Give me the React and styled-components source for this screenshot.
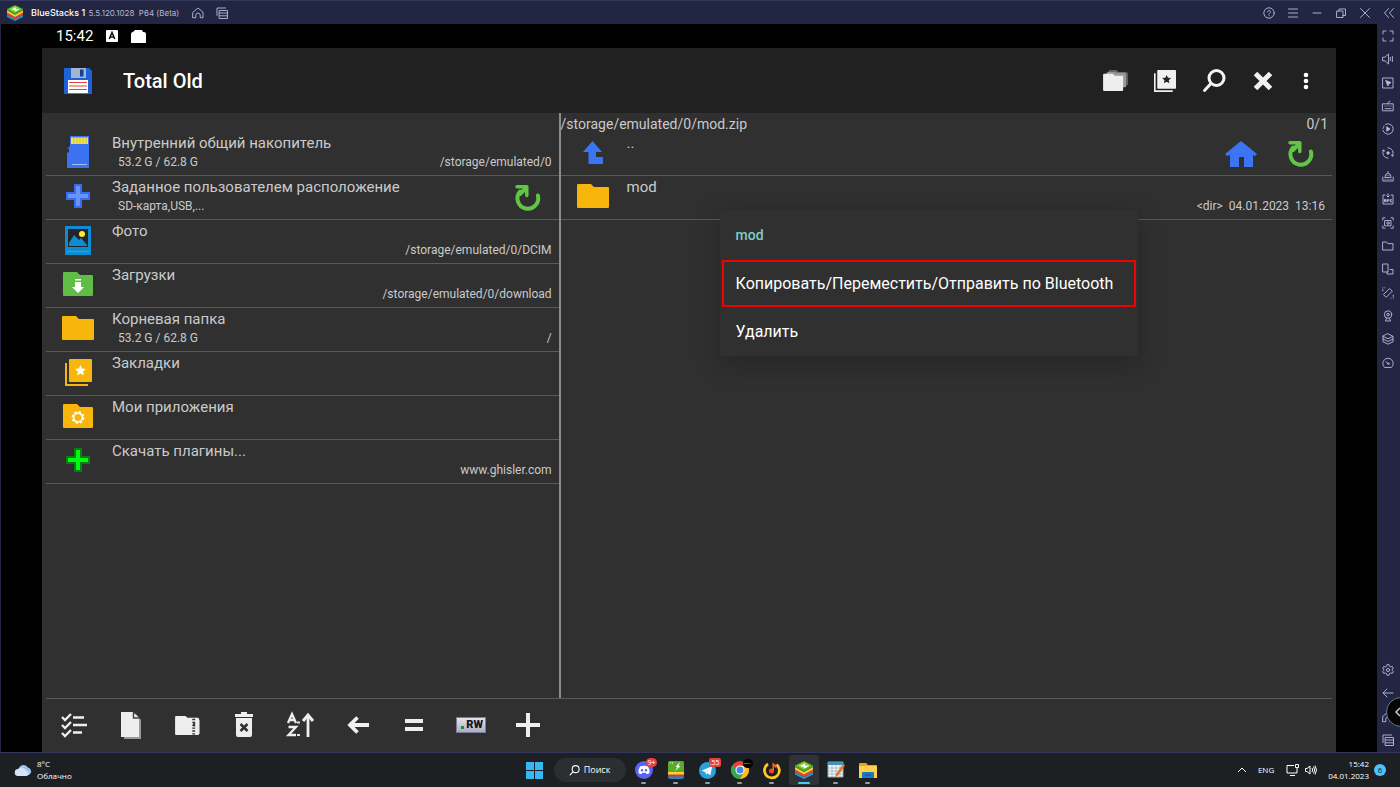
import React from "react";
import styled, { createGlobalStyle } from "styled-components";

const GlobalStyle = createGlobalStyle`
  *, *::before, *::after { box-sizing: border-box; }
  body { margin: 0; background: #000; font-family: Roboto, "Noto Sans", sans-serif; }
  button { margin: 0; padding: 0; border: 0; background: none; color: inherit; font: inherit; text-align: left; }
  ul { list-style: none; margin: 0; padding: 0; }
  svg { display: block; flex: none; overflow: visible; }
`;

const Desktop = styled.div`
  min-height: 100vh;
  display: flex;
  flex-direction: column;
`;

const TitleBar = styled.header`
  height: 24px;
  display: flex;
  align-items: center;
  justify-content: space-between;
  padding: 0 5px 0 7px;
  background: #232642;
  border-top: 1px solid #34385a;
  color: #fff;
  font-family: Inter, "Open Sans", sans-serif;
`;

const TitleGroup = styled.div`
  display: flex;
  align-items: center;
  gap: ${(p) => p.$gap}px;
`;

const WindowTitle = styled.h1`
  margin: 0 9px 0 4px;
  font-size: 9px;
  line-height: 12px;
  font-weight: 500;
  white-space: nowrap;
`;

const Version = styled.span`
  margin-left: 1px;
  font-size: 8px;
  font-weight: 400;
  color: #b4b7d4;
`;

const LineButton = styled.button`
  width: 12px;
  height: 12px;
  color: #b9bcdb;
`;

const Workspace = styled.div`
  flex: 1;
  display: flex;
  background: #232642;
`;

const Screen = styled.main`
  flex: 1;
  min-width: 0;
  display: flex;
  flex-direction: column;
  margin-left: 1px;
  padding: 0 41px;
  background: #000;
`;

const StatusBar = styled.div`
  height: 24px;
  display: flex;
  align-items: center;
  gap: 13px;
  padding-left: 14px;
  color: #fff;
  font-size: 15px;
  line-height: 24px;
`;

const AppBar = styled.div`
  height: 65px;
  display: flex;
  align-items: center;
  padding: 0 11px 0 22px;
  background: #212121;
`;

const AppTitle = styled.h2`
  flex: 1;
  margin: 0 0 0 31px;
  color: #fff;
  font-size: 20px;
  line-height: 24px;
  font-weight: 500;
`;

const BarButton = styled.button`
  width: ${(p) => p.$width || 49}px;
  height: 48px;
  display: flex;
  align-items: center;
  justify-content: center;
`;

const Panes = styled.div`
  flex: 1;
  display: grid;
  grid-template-columns: calc(40% + 1px) minmax(0, 1fr);
  background: #303030;
`;

const Pane = styled.section`
  position: relative;
  padding: ${(p) => (p.$left ? "0 0 0 4px" : "0 4px 0 0")};
  border-right: ${(p) => (p.$left ? "2px solid #8c8c8c" : "0")};
`;

const PathBar = styled.div`
  height: 19px;
  display: flex;
  justify-content: space-between;
  padding-right: 4px;
  color: #cacaca;
  font-size: 14px;
  line-height: 22px;
`;

const Row = styled.li`
  height: 44px;
  display: flex;
  align-items: center;
  border-bottom: 1px solid #5a5a5a;
`;

const Entry = styled.button`
  flex: 1;
  min-width: 0;
  height: 43px;
  display: flex;
`;

const IconCell = styled.span`
  width: 64px;
  height: 40px;
  display: flex;
  align-items: center;
  justify-content: center;
`;

const Labels = styled.span`
  flex: 1;
  display: flex;
  flex-direction: column;
  padding: 2px 7px 0 2px;
`;

const Name = styled.span`
  color: #cacaca;
  font-size: 15px;
  line-height: 19px;
`;

const Details = styled.span`
  display: flex;
  justify-content: space-between;
  padding-left: 6px;
  color: #cacaca;
  font-size: 12px;
  line-height: 19px;
`;

const Meta = styled.span`
  display: flex;
  gap: 6px;
  margin-left: auto;
`;

const RowAction = styled.button`
  width: 60px;
  height: 42px;
  display: flex;
  align-items: center;
  justify-content: center;
  &:last-child { margin-right: 1px; }
`;

const ContextMenu = styled.div`
  position: absolute;
  top: 97px;
  left: 159px;
  width: 418px;
  background: #303030;
  border-radius: 2px;
  box-shadow: 0 8px 24px 4px rgba(0, 0, 0, 0.18);
`;

const MenuTitle = styled.h3`
  margin: 0;
  padding: 0 16px;
  color: #80cbc4;
  font-size: 14px;
  line-height: 50px;
  font-weight: 500;
`;

const MenuItem = styled.button`
  display: block;
  width: 414px;
  margin: 0 2px 1px;
  padding: 0 12px;
  border: 2px solid ${(p) => (p.$marked ? "#f40000" : "transparent")};
  color: #fff;
  font-size: 16px;
  line-height: 43px;
  white-space: nowrap;
`;

const ToolBar = styled.div`
  height: 54px;
  padding: 0 4px;
  background: #303030;
`;

const Tools = styled.div`
  height: 54px;
  border-top: 1px solid #5a5a5a;
`;

const ToolGrid = styled.div`
  width: 510px;
  height: 52px;
  display: grid;
  grid-template-columns: repeat(9, 1fr);
`;

const Tool = styled.button`
  display: flex;
  align-items: center;
  justify-content: center;
`;

const SideBar = styled.aside`
  position: relative;
  width: 23px;
  display: flex;
  flex-direction: column;
  justify-content: space-between;
  padding: 6px 5px;
  overflow: hidden;
`;

const SideGroup = styled.div`
  height: ${(p) => p.$height}px;
  display: flex;
  flex-direction: column;
  justify-content: space-between;
`;

const Bubble = styled.button`
  position: absolute;
  right: -16px;
  bottom: 25px;
  width: 30px;
  height: 30px;
  padding-left: 8px;
  border: 1px solid #5d7f86;
  border-radius: 50%;
  background: #050505;
`;

const TaskBar = styled.footer`
  height: 35px;
  display: grid;
  grid-template-columns: 1fr auto 1fr;
  align-items: center;
  background: #1d2022;
  border-top: 1px solid #35365e;
  color: #fff;
  font-family: "Open Sans", "Noto Sans", sans-serif;
  font-size: 8px;
  line-height: 12px;
`;

const Weather = styled.button`
  display: flex;
  align-items: center;
  gap: 4px;
  padding-left: 14px;
`;

const Lines = styled.span`
  display: flex;
  flex-direction: column;
  text-align: ${(p) => p.$align || "left"};
`;

const Dock = styled.nav`
  display: flex;
  align-items: center;
  padding-left: 2px;
`;

const DockButton = styled.button`
  position: relative;
  width: ${(p) => (p.$active ? 30 : 32)}px;
  margin: 0 ${(p) => (p.$active ? 1 : 0)}px;
  height: 30px;
  display: flex;
  align-items: center;
  justify-content: center;
  border-radius: 3px;
  background: ${(p) => (p.$active ? "#303335" : "none")};
  &::after {
    content: "";
    display: ${(p) => (p.$plain ? "none" : "block")};
    position: absolute;
    bottom: 1px;
    width: ${(p) => (p.$active ? 12 : 5)}px;
    height: 2px;
    border-radius: 1px;
    background: ${(p) => (p.$active ? "#55c5f5" : "#9a9c9e")};
  }
`;

const SearchButton = styled.button`
  width: 72px;
  height: 24px;
  display: flex;
  align-items: center;
  justify-content: center;
  gap: 4px;
  margin: 0 2px 0 3px;
  border-radius: 12px;
  background: #2c2f31;
  font-size: 9px;
`;

const Badge = styled.span`
  position: absolute;
  top: ${(p) => (p.$top || 3)}px;
  right: ${(p) => p.$right}px;
  min-width: 10px;
  padding: 0 1px;
  border-radius: ${(p) => (p.$square ? 2 : 5)}px;
  background: ${(p) => p.$color || "#e53f3f"};
  color: #fff;
  font-size: ${(p) => p.$size || 7}px;
  line-height: 9px;
  text-align: center;
`;

const Tray = styled.div`
  display: flex;
  align-items: center;
  justify-content: flex-end;
  padding-right: 14px;
`;

const TrayItem = styled.button`
  margin-right: ${(p) => p.$after}px;
`;

const Count = styled.span`
  width: 12px;
  height: 12px;
  border-radius: 50%;
  background: #4cc2ff;
  color: #10242e;
  line-height: 12px;
  text-align: center;
`;

/* Thin outline icons of the emulator frame */
const Line = ({ children }) => (
  <svg width="12" height="12" viewBox="0 0 12 12" fill="none" stroke="currentColor" strokeWidth="0.9" strokeLinecap="round" strokeLinejoin="round">
    {children}
  </svg>
);

const lineIcons = {
  home: <path d="M1 5.2 6 1l5 4.2v5.5H8.2V8.2a2.2 2.2 0 0 0-4.4 0v2.5H1z" />,
  recents: <path d="M3.500 3.500h8v8h-8zM3.500 6h8M3.500 8.800h8M1 8.500V1h8.500" />,
  help: <><circle cx="6" cy="6" r="5.2" /><path d="M4.5 4.9C4.6 3 7.5 3 7.5 4.8 7.5 6 6 6 6 7.2M6 8.7v.1" /></>,
  menu: <path d="M1.500 2h9M1.500 6h9M1.500 10h9" />,
  minimize: <path d="M2 6h8" />,
  restore: <path d="M2 4h6v6.5H2zM4 4V2h6.5v6.5H8" />,
  close: <path d="m1.5 1.5 9 9m0-9-9 9" />,
  collapse: <path d="M5.5 1.5 1.5 6l4 4.5M10.5 1.5l-4 4.5 4 4.5" />,
  full: <path d="M1 4V1h3M8 1h3v3M11 8v3H8M4 11H1V8" />,
  volume: <path d="M1 4.2h2L6.5 1v10L3 7.8H1zM8.3 4.3v3.4M10.4 3.5v5" />,
  pointer: <><path d="M1 1h10v10H1z" /><path d="m4 3.6 5 2-2 1-1 2z" fill="currentColor" /></>,
  keyboard: <path d="M.8 3.8h10.4v7H.8zM6 3.8V2.5L8 1.2M3 6h.2M5 6h.2M7 6h.2M9 6h.2M3 8.7h6" />,
  play: <><path d="M3.5 1.4A5.2 5.2 0 1 1 1 7.5" /><path d="M1 5.5 2 3" strokeDasharray="1 1" /><path d="m5 4 3 2-3 2z" fill="currentColor" /></>,
  sync: <><path d="M6 .8a5.2 5.2 0 0 1 4.2 8.2M6 11.2A5.2 5.2 0 0 1 1.8 3" /><circle cx="6" cy="6" r="1.2" fill="currentColor" /><path d="m9.8 7.8.4 1.4 1.2-.5M2.2 4.3 1.8 3l-1.2.5" /></>,
  robot: <path d="M.8 7v4h10.4V7M3 6.500a3 3 0 0 1 6 0v1H3zM6 3.500V1.500M3 9.300h.2M5 9.300h.2M7 9.300h.2M9 9.300h.2M5 5.700h.2M7 5.700h.2" />,
  apk: <path d="M3 2H1v9h10V2H9M6 .8v3M4.7 2.8 6 4l1.3-1.2M2.5 8.8V6.5H4v2.3M2.5 7.8H4M5.3 8.8V6.5h1.4v1.3H5.3M8.2 6.5v2.3M9.7 6.5 8.3 7.7l1.4 1.1" />,
  capture: <><path d="M.8 3V.8H3M9 .8h2.2V3M11.2 9v2.2H9M3 11.2H.8V9M3 3.5h6v5.3H3z" /><circle cx="6" cy="6.1" r="1.2" /></>,
  folder: <path d="M1 2h3.5l1.3 1.6H11V10H1z" />,
  resize: <path d="M1 1h5v8H1zM8 6.500h3V11H5V9" />,
  rotate: <><path d="m7.8 1.7 2.5 2.5-6.1 6.1-2.5-2.500z" /><path d="M.8 4v-1.500M.8.800h.1M2.800.800h.1M11.200 8v1.500M11.200 11.200h-.1M9.200 11.200h-.1" /></>,
  location: <><circle cx="6" cy="4.600" r="3.700" /><circle cx="6" cy="4.600" r="1.300" /><path d="M4.500 8.200 3.500 11h5l-1-2.800" /></>,
  layers: <path d="m6 .8 5 2.5-5 2.500-5-2.500zM1 3.500v5.200l5 2.500 5-2.500V3.500M1 6l5 2.500L11 6" />,
  gauge: <><path d="M2.400 10.200a5.200 5.200 0 1 1 7.200 0zM6 6.500 4 4.800" /><circle cx="6.300" cy="6.700" r=".7" /></>,
  gear: <><path d="m5 .8-.4 1.500-1.500.7-1.400-.7-1 1.700 1 1v1.600l-1 1 1 1.800 1.400-.5 1.500.7.400 1.600h2l.4-1.600 1.500-.7 1.400.5 1-1.800-1-1V5l1-1-1-1.700-1.400.7-1.500-.7L7 .8z" /><circle cx="6" cy="6" r="1.600" /></>,
  back: <path d="M11 6H1l4-4M1 6l4 4" />,
};

const LineIcon = ({ name }) => <Line>{lineIcons[name]}</Line>;

/* Colour icons of the file manager */
const Floppy = () => (
  <svg width="28" height="28" viewBox="0 0 28 28">
    <path d="M0 1h25l3 3v23H0z" fill="#1f62d8" />
    <path d="M7 1h15v10H7z" fill="#a3b5cf" /><path d="M16 2.500h3.500v7H16z" fill="#153f9d" />
    <path d="M4 13h20v14H4z" fill="#fff" />
    <path d="M5 15.500h18M5 19h18M5 22.500h18M4 26.500h20" stroke="#e5453d" />
  </svg>
);
const SdCard = () => (
  <svg width="24" height="34" viewBox="0 0 24 34">
    <path d="M4 1h19v32H1V18l2-1v-3H1l3-3z" fill="#3a72f0" /><path d="M5 2.500h17V9H5z" fill="#f5e451" />
    <path d="M8 2.500V9m3-6.500V9m3-6.500V9m3-6.500V9m3-6.500V9" stroke="#c5a62f" strokeWidth=".7" /><path d="M6 29.500h15" stroke="#a3bdf8" />
  </svg>
);
const Plus = ({ edge, fill }) => (
  <svg width="26" height="26" viewBox="0 0 26 26">
    <path d="M10 2h6v8h8v6h-8v8h-6v-8H2v-6h8z" fill={fill} stroke={edge} strokeWidth="2" />
  </svg>
);
const Photo = () => (
  <svg width="26" height="29" viewBox="0 0 26 29">
    <path d="M0 0h26v29H0z" fill="#0d8bd3" /><path d="M3 3h20v18H3z" fill="#252525" />
    <path d="m4 17 5-8 5 5 2-2 6 7v1H4z" fill="#0d8bd3" /><circle cx="17" cy="8" r="3" fill="#ffe837" /><path d="M2 25.500h22" stroke="#35a3dd" />
  </svg>
);
const Folder = ({ color = "#f8b50b", width = 32, children }) => (
  <svg width={width} height="24" viewBox={`0 0 ${width} 24`}>
    <path d={`M1 0h13l3 3H${width - 1}q1 0 1 1v19q0 1-1 1H1q-1 0-1-1V1q0-1 1-1z`} fill={color} />
    {children}
  </svg>
);
const STAR = "m0-5.500 1.600 3.500 3.900.4-2.900 2.600.8 3.800L0 2.900-3.400 4.800l.8-3.800-2.900-2.600 3.900-.4z";
const Stack = ({ color, star, size }) => (
  <svg width={size} height={size} viewBox="0 0 27 27">
    <path d="M1 4v22h22" fill="none" stroke={color} strokeWidth="2" /><rect x="4" y="0" width="23" height="23" rx="1" fill={color} />
    <path d={STAR} transform="translate(15.500 11.500)" fill={star} />
  </svg>
);
const Gear = () => (
  <g transform="translate(15 13.500)">
    <circle r="4.400" fill="none" stroke="#fff" strokeWidth="1.600" /><circle r="5.700" fill="none" stroke="#fff" strokeWidth="1.500" strokeDasharray="2.240 2.240" />
  </g>
);
const Refresh = () => (
  <svg width="26" height="26" viewBox="0 0 26 26" fill="none" stroke="#63c546" strokeWidth="4" strokeLinecap="round">
    <path d="M22.900 10.500A10.400 10.400 0 1 1 5 6.500" />
    <path d="M2 1.800h9.800v8.700" strokeWidth="3.500" strokeLinejoin="round" />
    <path d="M11 3 5 9" />
  </svg>
);
const UpArrow = () => (
  <svg width="20" height="23" viewBox="0 0 20 23"><path d="m9.500 0 9.500 11h-6v5h7v7H5.500V11H0z" fill="#3c75f3" /></svg>
);
const House = () => (
  <svg width="32" height="26" viewBox="0 0 32 26"><path d="m16 0 16 13-2 2-2-1v12h-9V16h-5v10H5V14l-3 1-2-2z" fill="#3c75f3" /></svg>
);

/* White icons of the two app bars */
const Folders = () => (
  <svg width="25" height="21" viewBox="0 0 26 22">
    <path d="M5 2 7 0h7l2 2h8q2 0 2 2v12h-5z" fill="#666" /><path d="M3 4 5 2h7l2 1h8q2 0 2 2v13h-4z" fill="#999" />
    <path d="M1 4h9l2 2h8q1 0 1 1v14q0 1-1 1H1q-1 0-1-1V5q0-1 1-1z" fill="#eee" />
  </svg>
);
const Search = ({ size = 24, stroke = 3 }) => (
  <svg width={size} height={size} viewBox="0 0 24 24" fill="none" stroke="#f4f4f4" strokeWidth={stroke} strokeLinecap="round"><circle cx="14.500" cy="9" r="7.500" /><path d="M8.500 15 2.500 21.500" /></svg>
);
const Cross = () => (
  <svg width="20" height="20" viewBox="0 0 20 20" stroke="#f0f0f0" strokeWidth="5"><path d="m2.500 2.500 15 15m0-15-15 15" /></svg>
);
const Dots = () => (
  <svg width="6" height="18" viewBox="0 0 6 18" fill="#fff"><circle cx="3" cy="3" r="2.300" /><circle cx="3" cy="9" r="2.300" /><circle cx="3" cy="15" r="2.300" /></svg>
);

const tools = [
  ["Выбрать", <svg width="26" height="24" viewBox="0 0 26 24" fill="none" stroke="#eee" strokeWidth="2.300"><path d="m1 4 3 3 6-6M1 12l3 3 6-6M1 20l3 3 6-6M12 4.500h11M12 12h14M12 19.500h9" /></svg>],
  ["Новый файл", <svg width="20" height="27" viewBox="0 0 20 27"><path d="m3 3 12-1 5 6v19H3z" fill="#999" /><path d="M0 0h12l6 6v19H0z" fill="#eee" /><path d="M12.500 0v6h6" fill="none" stroke="#444" strokeWidth="1.500" /></svg>],
  ["Упаковать", <svg width="25" height="21" viewBox="0 0 26 22"><path d="M3 20h23V5H14z" fill="#999" /><path d="M1 1h10l2 2h11q1 0 1 1v16q0 1-1 1H1q-1 0-1-1V2q0-1 1-1z" fill="#eee" /><path d="M19.500 4v17" stroke="#303030" strokeWidth="3" strokeDasharray="1.500 1.500" /><path d="M20 8v4" stroke="#303030" strokeWidth="2" /></svg>],
  ["Удалить", <svg width="20" height="26" viewBox="0 0 20 26"><path d="M7 0h6v2h6v3H1V2h6zM2 6h16v17q0 2-2 2H4q-2 0-2-2z" fill="#eee" /><path d="m6.500 12 7 7m0-7-7 7" stroke="#303030" strokeWidth="2.500" /></svg>],
  ["Сортировка", <svg width="27" height="24" viewBox="0 0 27 24" fill="none" stroke="#eee" strokeWidth="2.300"><path d="m1 10 4-9 4 9M3 7h4.500M1.500 14H9l-7.500 8H9" /><path d="M11.500 8.500v2M11.500 21v2M21 3v21" strokeWidth="2.800" /><path d="m16 8 5-6 5 6" strokeWidth="3" /></svg>],
  ["Назад", <svg width="22" height="18" viewBox="0 0 22 18" fill="none" stroke="#f0f0f0" strokeWidth="3.800"><path d="M3 9h19M10.500 1.500 3 9l7.500 7.500" /></svg>],
  ["Сравнить", <svg width="18" height="12" viewBox="0 0 18 12" fill="#eee"><path d="M0 0h18v4H0zM0 8h18v4H0z" /></svg>],
];

const places = [
  { name: "Внутренний общий накопитель", sub: "53.2 G / 62.8 G", path: "/storage/emulated/0", icon: <SdCard /> },
  { name: "Заданное пользователем расположение", sub: "SD-карта,USB,...", icon: <Plus fill="#6b93f7" edge="#356df0" />, refresh: true },
  { name: "Фото", path: "/storage/emulated/0/DCIM", icon: <Photo /> },
  { name: "Загрузки", path: "/storage/emulated/0/download", icon: <Folder width={30} color="#60bd46"><path d="M12 7h6v1.500h-6zM12 10h6v5h3l-6 6-6-6h3z" fill="#fff" /></Folder> },
  { name: "Корневая папка", sub: "53.2 G / 62.8 G", path: "/", icon: <Folder /> },
  { name: "Закладки", icon: <Stack size={27} color="#f8b50b" star="#fff" /> },
  { name: "Мои приложения", icon: <Folder width={30}><Gear /></Folder> },
  { name: "Скачать плагины...", path: "www.ghisler.com", icon: <Plus fill="#00fa12" edge="#087d12" /> },
];

const RwBadge = styled.span`
  width: 30px;
  height: 16px;
  display: flex;
  align-items: center;
  justify-content: flex-end;
  gap: 2px;
  padding-right: 2px;
  border: 1px solid #7d7b96;
  background: linear-gradient(#e4e3ee, #aeacc4);
  color: #15151c;
  font-size: 11px;
  line-height: 14px;
  font-weight: 900;
  &::before { content: ""; width: 3px; height: 3px; margin-top: 5px; background: #0a9a2c; }
`;

const sideTop = ["full", "volume", "pointer", "keyboard", "play", "sync", "robot", "apk", "capture", "folder", "resize", "rotate", "location", "layers", "gauge"];
const sideBottom = ["gear", "back", "home", "recents"];

const BlueStacks = ({ size }) => (
  <svg width={size} height={size} viewBox="0 0 18 18">
    <path d="m0 11 9 5 9-5v2.500l-9 4.500-9-4.500z" fill="#169bd7" /><path d="m0 8.500 9 5 9-5V11l-9 5-9-5z" fill="#ef3e36" /><path d="m0 6 9 5 9-5v2.500l-9 5-9-5z" fill="#ffd02e" />
    <path d="m9 0 9 4.500V6l-9 5-9-5V4.500z" fill="#48a928" /><path d="m9 1 7 3.500-7 4-7-4z" fill="#8fd43a" /><path d="m5 5 5-2.500v2l4 .5-5 2.500V6z" fill="#fff" />
  </svg>
);

const dock = [
  { label: "Discord", badge: { text: "9+", right: 3 }, icon: <svg width="18" height="18" viewBox="0 0 18 18"><circle cx="9" cy="9" r="9" fill="#5865f2" /><path d="M5 5.500q4-1.500 8 0 2 3.500 1.500 6.500-1.500 1.200-3 1l-.7-1.200H7.200L6.500 13q-1.500.2-3-1Q3 9 5 5.500z" fill="#fff" /><circle cx="7" cy="9.300" r="1.200" fill="#5865f2" /><circle cx="11" cy="9.300" r="1.200" fill="#5865f2" /></svg> },
  { label: "BlueStacks Manager", icon: <svg width="16" height="18" viewBox="0 0 16 18"><rect width="16" height="18" rx="2" fill="#1d86c8" /><path d="M0 12h16v3.500H0z" fill="#e4342e" /><path d="M0 11h16v2.500H0z" fill="#f9d22e" /><path d="M2 0h12q2 0 2 2v9H0V2q0-2 2-2z" fill="#58ab2c" /><path d="M12 1 7.500 6h2L7 10l5.500-5h-2z" fill="#fff" /><path d="M2 2h1M4 2h1" stroke="#fff" /></svg> },
  { label: "Telegram", badge: { text: ".55", right: 3, square: true }, icon: <svg width="17" height="17" viewBox="0 0 18 18"><circle cx="9" cy="9" r="9" fill="#2aa1da" /><path d="m3 9 11-4.500-2 9.500-3-2-1.500 1.500L7 11z" fill="#fff" /><path d="m7 11 5-4.500-4 5z" fill="#b4d8e9" /></svg> },
  { label: "Chrome", badge: { text: "RUPLAY", right: 3, color: "#000", size: 2, top: 4 }, icon: <svg width="18" height="18" viewBox="0 0 18 18"><circle cx="9" cy="9" r="9" fill="#e94235" /><path d="M9 9 1.200 4.500A9 9 0 0 0 9 18l4-7z" fill="#32a852" /><path d="m9 9 4 2.300L9 18a9 9 0 0 0 8-13H9z" fill="#fbc116" /><circle cx="9" cy="9" r="4.500" fill="#fff" /><circle cx="9" cy="9" r="3.500" fill="#4285f4" /></svg> },
  { label: "Музыка", icon: <svg width="18" height="18" viewBox="0 0 18 18" fill="none"><path d="M5 3a7.500 7.500 0 1 0 8.500.5" stroke="#ffcb20" strokeWidth="2.800" /><circle cx="8.500" cy="10" r="2.500" fill="#ff3d33" /><path d="M9.500 10V1c1 2 3 2 4 3.500v3L11 5.500V10z" fill="#ff5a34" /></svg> },
  { label: "BlueStacks", active: true, icon: <BlueStacks size={18} /> },
  { label: "Блокнот", icon: <svg width="18" height="18" viewBox="0 0 18 18"><path d="M1 1h15v15H1z" fill="#f3f7f9" stroke="#9aa6ae" /><path d="M1 1h15v3H1z" fill="#4991bd" /><path d="M1 7h15M1 10h15M1 13h15M5 4v12M9 4v12M13 4v12" stroke="#8aa9ba" strokeWidth=".7" /><path d="m16 3 2 1.500-7 10-2.500 1.500.5-3z" fill="#e97429" /></svg> },
  { label: "Проводник", icon: <svg width="18" height="17" viewBox="0 0 18 17"><path d="M1 1h6l2 2h8q1 0 1 1v5H0V2q0-1 1-1z" fill="#e8a51c" /><path d="M0 4h18v12H0z" fill="#ffcf48" /><path d="M3 16v-5q0-1 1-1h10q1 0 1 1v5z" fill="#1977c9" /><path d="M6 13h6" stroke="#0c558f" /></svg> },
];

const FileRow = ({ icon, name, sub, meta, children }) => (
  <Row>
    <Entry type="button">
      <IconCell>{icon}</IconCell>
      <Labels>
        <Name>{name}</Name>
        <Details>{sub}{meta && <Meta>{meta.map((m) => <span key={m}>{m}</span>)}</Meta>}</Details>
      </Labels>
    </Entry>
    {children}
  </Row>
);

const LineControls = ({ names }) => names.map((n) => <LineButton key={n} type="button" aria-label={n}><LineIcon name={n} /></LineButton>);

export default function App() {
  return (
    <Desktop>
      <GlobalStyle />
      <TitleBar>
        <TitleGroup $gap={4}>
          <BlueStacks size={16} />
          <WindowTitle>BlueStacks 1 <Version>5.5.120.1028&nbsp; P64 (Beta)</Version></WindowTitle>
          <TitleGroup $gap={12}><LineControls names={["home", "recents"]} /></TitleGroup>
        </TitleGroup>
        <TitleGroup $gap={12}>
          <LineControls names={["help", "menu", "minimize", "restore", "close", "collapse"]} />
        </TitleGroup>
      </TitleBar>

      <Workspace>
        <Screen>
          <StatusBar>
            <span>15:42</span>
            <svg width="12" height="12" viewBox="0 0 12 12"><rect width="12" height="12" rx="1" fill="#fff" /><path d="m3.200 9 2.800-6.500L8.800 9M4.200 7h3.600" fill="none" stroke="#111" strokeWidth="1.500" /></svg>
            <svg width="15" height="13" viewBox="0 0 15 13"><path d="M2 2 4 0h7l1 2h1q2 0 2 2v9H0V4q0-2 2-2z" fill="#fff" /></svg>
          </StatusBar>
          <AppBar>
            <Floppy />
            <AppTitle>Total Old</AppTitle>
            <BarButton type="button" aria-label="Папки"><Folders /></BarButton>
            <BarButton type="button" aria-label="Закладки"><Stack size={22} color="#f0f0f0" star="#212121" /></BarButton>
            <BarButton type="button" aria-label="Поиск"><Search /></BarButton>
            <BarButton type="button" aria-label="Закрыть"><Cross /></BarButton>
            <BarButton type="button" aria-label="Меню" $width={38}><Dots /></BarButton>
          </AppBar>

          <Panes>
            <Pane $left>
              <PathBar />
              <ul>
                {places.map((p) => (
                  <FileRow key={p.name} icon={p.icon} name={p.name} sub={p.sub} meta={p.path && [p.path]}>
                    {p.refresh && <RowAction type="button" aria-label="Обновить"><Refresh /></RowAction>}
                  </FileRow>
                ))}
              </ul>
            </Pane>
            <Pane>
              <PathBar><span>/storage/emulated/0/mod.zip</span><span>0/1</span></PathBar>
              <ul>
                <FileRow icon={<UpArrow />} name="..">
                  <RowAction type="button" aria-label="Домой"><House /></RowAction>
                  <RowAction type="button" aria-label="Обновить"><Refresh /></RowAction>
                </FileRow>
                <FileRow icon={<Folder />} name="mod" meta={["<dir>", "04.01.2023", "13:16"]} />
              </ul>
              <ContextMenu>
                <MenuTitle>mod</MenuTitle>
                <MenuItem type="button" $marked>Копировать/Переместить/Отправить по Bluetooth</MenuItem>
                <MenuItem type="button">Удалить</MenuItem>
              </ContextMenu>
            </Pane>
          </Panes>

          <ToolBar>
            <Tools>
              <ToolGrid>
                {tools.map(([label, icon]) => <Tool key={label} type="button" aria-label={label}>{icon}</Tool>)}
                <Tool type="button"><RwBadge>RW</RwBadge></Tool>
                <Tool type="button" aria-label="Добавить"><svg width="24" height="24" viewBox="0 0 24 24" stroke="#eee" strokeWidth="4"><path d="M12 0v24M0 12h24" /></svg></Tool>
              </ToolGrid>
            </Tools>
          </ToolBar>
        </Screen>

        <SideBar>
          <SideGroup $height={339}><LineControls names={sideTop} /></SideGroup>
          <SideGroup $height={82}><LineControls names={sideBottom} /></SideGroup>
          <Bubble type="button" aria-label="Развернуть">
            <svg width="6" height="10" viewBox="0 0 6 10" fill="none" stroke="#ccc" strokeWidth="1.500"><path d="M5 1 1 5l4 4" /></svg>
          </Bubble>
        </SideBar>
      </Workspace>

      <TaskBar>
        <Weather type="button">
          <svg width="19" height="12" viewBox="0 0 19 12"><path d="M5 11a4 4 0 0 1 0-7 5 5 0 0 1 9-.5 4 4 0 0 1 1 7.500z" fill="#9fc3ed" /><path d="M4 12a3.500 3.500 0 0 1 .5-7A4.500 4.500 0 0 1 12 7a2.500 2.500 0 0 1 0 5z" fill="#d4e5fa" /></svg>
          <Lines><span>8°C</span><span>Облачно</span></Lines>
        </Weather>
        <Dock>
          <DockButton type="button" $plain aria-label="Пуск">
            <svg width="17" height="17" viewBox="0 0 17 17" fill="#35b9f5"><path d="M0 0h8v8H0zM9 0h8v8H9zM0 9h8v8H0zM9 9h8v8H9z" /></svg>
          </DockButton>
          <SearchButton type="button"><Search size={11} stroke={2.5} />Поиск</SearchButton>
          {dock.map(({ label, active, icon, badge }) => (
            <DockButton key={label} type="button" aria-label={label} $active={active}>
              {icon}
              {badge && <Badge $right={badge.right} $top={badge.top} $square={badge.square} $color={badge.color} $size={badge.size}>{badge.text}</Badge>}
            </DockButton>
          ))}
        </Dock>
        <Tray>
          <TrayItem type="button" $after={11} aria-label="Скрытые значки"><svg width="10" height="6" viewBox="0 0 10 6" fill="none" stroke="#fff"><path d="m1 5 4-4 4 4" /></svg></TrayItem>
          <TrayItem type="button" $after={12}>ENG</TrayItem>
          <TrayItem type="button" $after={6} aria-label="Сеть"><svg width="13" height="12" viewBox="0 0 13 12" fill="none" stroke="#fff"><path d="M8 1.500H1v7.500h10V6M4 11.500h5" /><path d="M9.500 .5h3v3h-3zM11 3.500V6" /></svg></TrayItem>
          <TrayItem type="button" $after={11} aria-label="Громкость"><svg width="12" height="12" viewBox="0 0 12 12" fill="none" stroke="#fff"><path d="M.5 4.500H2L5 2v8L2 7.500H.5zM7 4q1.500 2 0 4M8.500 2.500q2.500 3.500 0 7M10 1.500q3 4.500 0 9" /></svg></TrayItem>
          <TrayItem type="button" $after={5}><Lines $align="right"><span>15:42</span><span>04.01.2023</span></Lines></TrayItem>
          <Count>6</Count>
        </Tray>
      </TaskBar>
    </Desktop>
  );
}
